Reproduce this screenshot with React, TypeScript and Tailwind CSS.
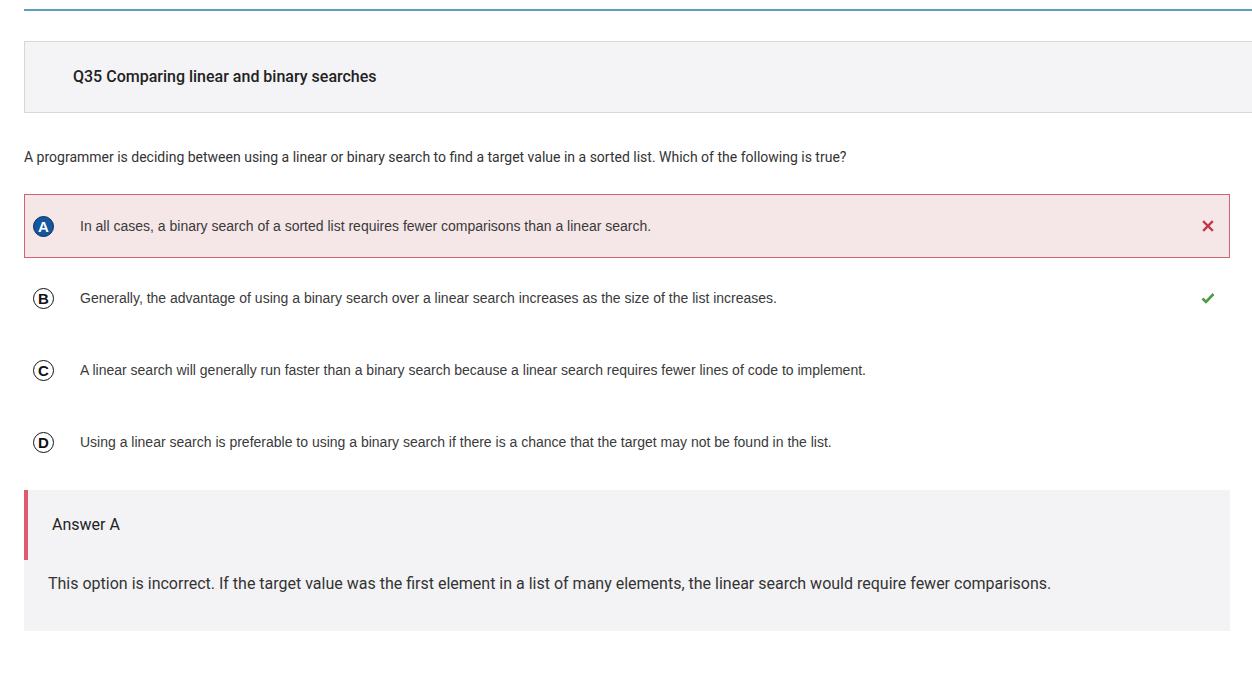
const options = [
    {
        letter: "A",
        text: "In all cases, a binary search of a sorted list requires fewer comparisons than a linear search.",
        selected: true,
        mark: "wrong",
    },
    {
        letter: "B",
        text: "Generally, the advantage of using a binary search over a linear search increases as the size of the list increases.",
        selected: false,
        mark: "right",
    },
    {
        letter: "C",
        text: "A linear search will generally run faster than a binary search because a linear search requires fewer lines of code to implement.",
        selected: false,
        mark: "",
    },
    {
        letter: "D",
        text: "Using a linear search is preferable to using a binary search if there is a chance that the target may not be found in the list.",
        selected: false,
        mark: "",
    },
];

function Cross() {
    return (
        <svg width="12" height="12" viewBox="0 0 12 12">
            <path d="M2 2 L10 10 M10 2 L2 10" stroke="#c3364a" strokeWidth="2.4" strokeLinecap="square" />
        </svg>
    );
}

function Check() {
    return (
        <svg width="14" height="12" viewBox="0 0 14 12">
            <path d="M1.5 6.5 L5 10 L12.5 2" stroke="#4c9a48" strokeWidth="2.6" fill="none" />
        </svg>
    );
}

function App() {
    return (
        <div className="w-[1252px] min-h-[677px] bg-white pl-[24px] pt-[9px] overflow-hidden font-['Roboto',sans-serif]">
            <div className="h-[2px] bg-[#5c9dc0]" />

            <div className="mt-[30px] h-[72px] border border-r-0 border-[#d7d7d7] bg-[#f4f4f6] flex items-center pl-[48px]">
                <h2 className="text-[16px] font-medium text-[#222]">Q35 Comparing linear and binary searches</h2>
            </div>

            <p className="mt-[35px] text-[14px] leading-[18px] text-[#333]">
                A programmer is deciding between using a linear or binary search to find a target value in a sorted list. Which of the following is true?
            </p>

            <div className="mt-[28px] mr-[22px] flex flex-col gap-[8px]">
                {options.map((o) => (
                    <div
                        key={o.letter}
                        className={
                            o.selected
                                ? "h-[64px] flex items-center border border-[#d06374] bg-[#f5e6e8] pl-[8px] pr-[14px]"
                                : "h-[64px] flex items-center border border-transparent pl-[8px] pr-[14px]"
                        }
                    >
                        <div
                            className={
                                o.selected
                                    ? "w-[21px] h-[21px] rounded-full bg-[#12579f] border-[1.5px] border-[#0b2e57] flex items-center justify-center text-white text-[15px] leading-none font-bold font-['Liberation_Sans',sans-serif]"
                                    : "w-[21px] h-[21px] rounded-full bg-white border-[1.5px] border-[#111] flex items-center justify-center text-[#111] text-[15px] leading-none font-bold font-['Liberation_Sans',sans-serif]"
                            }
                        >
                            {o.letter}
                        </div>
                        <span className="ml-[26px] flex-1 text-[14px] text-[#3a3a3a] font-['Liberation_Sans',Arial,sans-serif]">
                            {o.text}
                        </span>
                        <div className="w-[14px] flex justify-center">
                            {o.mark === "wrong" && <Cross />}
                            {o.mark === "right" && <Check />}
                        </div>
                    </div>
                ))}
            </div>

            <div className="mt-[16px] mr-[22px] bg-[#f3f3f5]">
                <div className="h-[70px] border-l-4 border-[#df5a6b] flex items-center pl-[24px]">
                    <span className="text-[16px] text-[#222]">Answer A</span>
                </div>
                <div className="px-[24px] pt-[12px] pb-[35px]">
                    <p className="text-[16px] leading-[24px] text-[#333]">
                        This option is incorrect. If the target value was the first element in a list of many elements, the linear search would require fewer comparisons.
                    </p>
                </div>
            </div>
        </div>
    );
}

export default App;
